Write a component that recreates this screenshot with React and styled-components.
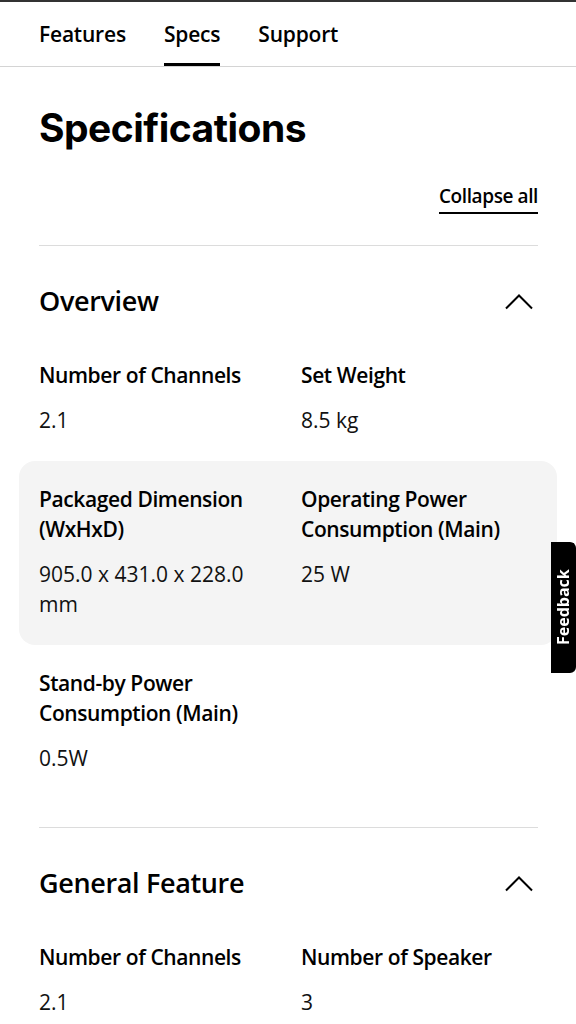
import React from 'react';
import styled, { createGlobalStyle } from 'styled-components';

const GlobalStyle = createGlobalStyle`
  * {
    box-sizing: border-box;
  }

  body {
    margin: 0;
    background: #fff;
    color: #000;
    font-family: 'Open Sans', 'Noto Sans', sans-serif;
  }
`;

const Nav = styled.nav`
  border-top: 2px solid #333;
  border-bottom: 1px solid #d4d4d4;
  height: 67px;
  display: flex;
  gap: 38px;
  padding-left: 39px;
`;

const Tab = styled.a`
  display: flex;
  align-items: center;
  font-size: 21px;
  font-weight: 600;
  line-height: 30px;
  letter-spacing: -0.2px;
  color: #000;
  text-decoration: none;
  border-bottom: 3px solid ${props => (props.$active ? '#000' : 'transparent')};
  padding-top: 3px;
`;

const Page = styled.main`
  padding: 0 38px 0 39px;
`;

const Title = styled.h1`
  margin: 37px 0 0;
  font-family: 'Inter', sans-serif;
  font-size: 39px;
  line-height: 48px;
  font-weight: 700;
  letter-spacing: -0.5px;
`;

const CollapseRow = styled.div`
  display: flex;
  justify-content: flex-end;
  margin-top: 31px;
  padding-bottom: 31px;
`;

const CollapseButton = styled.button`
  background: none;
  border: none;
  border-bottom: 2px solid #000;
  padding: 0 0 3px;
  font-family: inherit;
  font-size: 19px;
  font-weight: 600;
  line-height: 26px;
  letter-spacing: -0.4px;
  color: #000;
  cursor: pointer;
`;

const Section = styled.section`
  border-top: 1px solid #dcdcdc;
  padding: 37px 0 28px;
`;

const SectionHeader = styled.div`
  display: flex;
  align-items: center;
  justify-content: space-between;
  margin-bottom: 18px;
`;

const SectionTitle = styled.h2`
  margin: 0;
  font-size: 27px;
  line-height: 36px;
  font-weight: 600;
  letter-spacing: -0.35px;
`;

const Chevron = styled.svg`
  width: 30px;
  height: 17px;
  margin-right: 4px;
`;

const SpecRow = styled.div`
  display: grid;
  grid-template-columns: 1fr 1fr;
  column-gap: 25px;
  margin: 0 -19px 0 -20px;
  padding: 23px 19px 26px 20px;
  border-radius: 16px;
  background: ${props => (props.$highlight ? '#f4f4f4' : 'transparent')};
`;

const SpecItem = styled.div`
  display: flex;
  flex-direction: column;
  gap: 15px;
`;

const SpecLabel = styled.div`
  font-size: 21px;
  line-height: 30px;
  font-weight: 600;
  letter-spacing: -0.4px;
`;

const SpecValue = styled.div`
  font-size: 21px;
  line-height: 30px;
  font-weight: 400;
  color: #111;
`;

const FeedbackTab = styled.div`
  position: fixed;
  right: 0;
  top: 542px;
  width: 25px;
  height: 131px;
  background: #000;
  border-radius: 6px 0 0 6px;
  display: flex;
  align-items: center;
  justify-content: center;
  color: #fff;
  font-size: 16px;
  font-weight: 700;
  writing-mode: vertical-rl;
  transform: rotate(180deg);
`;

const sections = [
  {
    title: 'Overview',
    rows: [
      [
        { label: 'Number of Channels', value: '2.1' },
        { label: 'Set Weight', value: '8.5 kg' }
      ],
      [
        { label: 'Packaged Dimension (WxHxD)', value: '905.0 x 431.0 x 228.0 mm' },
        { label: 'Operating Power Consumption (Main)', value: '25 W' }
      ],
      [
        { label: 'Stand-by Power Consumption (Main)', value: '0.5W' }
      ]
    ]
  },
  {
    title: 'General Feature',
    rows: [
      [
        { label: 'Number of Channels', value: '2.1' },
        { label: 'Number of Speaker', value: '3' }
      ]
    ]
  }
];

function ChevronUp() {
  return (
    <Chevron viewBox="0 0 30 17" fill="none">
      <polyline points="2,15.5 15,2.5 28,15.5" stroke="#000" strokeWidth="2" />
    </Chevron>
  );
}

function App() {
  return (
    <>
      <GlobalStyle />
      <Nav>
        <Tab href="#">Features</Tab>
        <Tab href="#" $active>Specs</Tab>
        <Tab href="#">Support</Tab>
      </Nav>

      <Page>
        <Title>Specifications</Title>
        <CollapseRow>
          <CollapseButton>Collapse all</CollapseButton>
        </CollapseRow>

        {sections.map(section => (
          <Section key={section.title}>
            <SectionHeader>
              <SectionTitle>{section.title}</SectionTitle>
              <ChevronUp />
            </SectionHeader>
            {section.rows.map((row, i) => (
              <SpecRow key={i} $highlight={section.title === 'Overview' && i === 1}>
                {row.map(item => (
                  <SpecItem key={item.label}>
                    <SpecLabel>{item.label}</SpecLabel>
                    <SpecValue>{item.value}</SpecValue>
                  </SpecItem>
                ))}
              </SpecRow>
            ))}
          </Section>
        ))}
      </Page>

      <FeedbackTab>Feedback</FeedbackTab>
    </>
  );
}

export default App;
